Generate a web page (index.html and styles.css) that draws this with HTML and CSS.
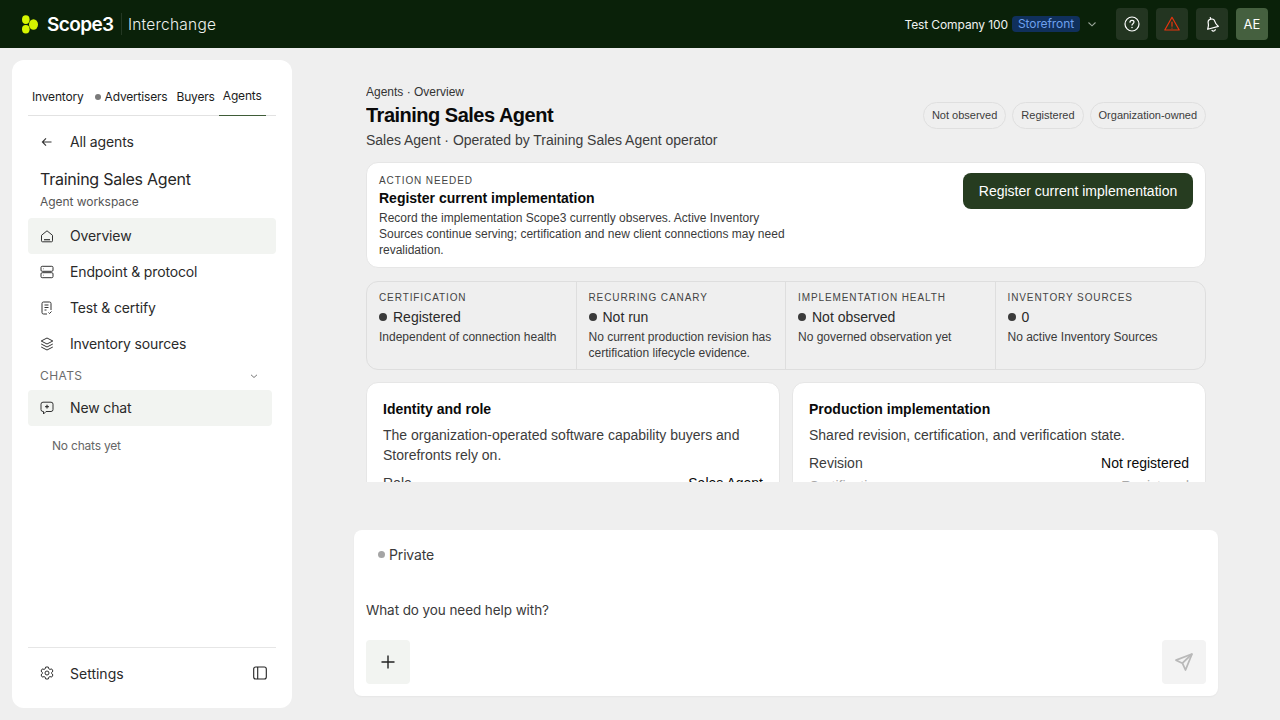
FILE: index.html
```html
<!DOCTYPE html>
<html lang="en">
<head>
<meta charset="utf-8">
<title>Training Sales Agent</title>
<link rel="stylesheet" href="styles.css">
</head>
<body>
<header class="topbar">
  <div class="brand">
    <svg class="logo" viewBox="0 0 16 19" width="16" height="19"><g fill="#d6f500"><ellipse cx="3.800" cy="4.600" rx="3.800" ry="4.400"/><ellipse cx="3.800" cy="14.300" rx="3.800" ry="4.200"/><ellipse cx="11.500" cy="9.500" rx="4.500" ry="5.200"/></g></svg>
    <span class="wordmark">Scope3</span>
    <span class="brand-sep"></span>
    <span class="product">Interchange</span>
  </div>
  <div class="top-right">
    <span class="company">Test Company 100</span>
    <span class="chip">Storefront</span>
    <svg class="chev" viewBox="0 0 10 10" width="10" height="10"><path d="M1.500 3.500 5 6.800l3.500-3.300" fill="none" stroke="#9aa69a" stroke-width="1.100"/></svg>
    <div class="top-buttons">
      <button class="top-btn"><svg viewBox="0 0 16 16" width="16" height="16" fill="none" stroke="#fff" stroke-width="1.200" stroke-linecap="round"><circle cx="8" cy="8" r="7"/><path d="M6 6.200c0-1.200 1-1.900 2-1.900s2 .7 2 1.800c0 1.500-2 1.600-2 3"/><path d="M8 11.500v.1" stroke-width="1.500"/></svg></button>
      <button class="top-btn"><svg viewBox="0 0 16 16" width="16" height="16" fill="none" stroke="#e8340f" stroke-width="1.200" stroke-linejoin="round" stroke-linecap="round"><path d="M8 1.300.8 14h14.400z"/><path d="M8 6v4.200M8 12v.1"/></svg></button>
      <button class="top-btn"><svg viewBox="0 0 16 16" width="16" height="16" fill="none" stroke="#fff" stroke-width="1.200" stroke-linejoin="round" stroke-linecap="round"><g transform="rotate(-15 8 8)"><path d="M8 3C5.800 3 4.500 4.700 4.500 6.800c0 2.400-1.500 3.600-2 5.200h11c-.5-1.600-2-2.800-2-5.200C11.500 4.700 10.200 3 8 3z"/><path d="M8 1.300V3M6.300 14.200a1.900 1.900 0 0 0 3.400 0"/></g></svg></button>
      <button class="top-btn avatar">AE</button>
    </div>
  </div>
</header>

<div class="shell">
  <aside class="sidebar">
    <nav class="tabs">
      <a class="tab">Inventory</a>
      <a class="tab tab-dot"><i></i>Advertisers</a>
      <a class="tab tab-buyers">Buyers</a>
      <a class="tab active">Agents</a>
    </nav>
    <a class="nav-row back">
      <svg class="ico" viewBox="0 0 14 14" width="14" height="14" fill="none" stroke="#333" stroke-width="1.100"><path d="M11.500 7H2.500M6 3.300 2.400 7 6 10.700"/></svg>
      <span>All agents</span>
    </a>
    <div class="side-title">Training Sales Agent</div>
    <div class="side-sub">Agent workspace</div>
    <a class="nav-row selected">
      <svg class="ico" viewBox="0 0 14 14" width="14" height="14" fill="none" stroke="#333" stroke-width="1"><path d="M1.500 6.300 7 1.800l5.500 4.500v5.500a1 1 0 0 1-1 1h-9a1 1 0 0 1-1-1z"/><path d="M4 10.700h6" stroke-width="1.200"/></svg>
      <span>Overview</span>
    </a>
    <a class="nav-row">
      <svg class="ico" viewBox="0 0 14 14" width="14" height="14" fill="none" stroke="#333" stroke-width="1"><rect x="1" y="1.300" width="12" height="5" rx="1.200"/><rect x="1" y="7.700" width="12" height="5" rx="1.200"/><path d="M3 3.800h.5M3 10.200h.5"/></svg>
      <span>Endpoint &amp; protocol</span>
    </a>
    <a class="nav-row">
      <svg class="ico" viewBox="0 0 14 14" width="14" height="14" fill="none" stroke="#333" stroke-width="1"><path d="M7 13H3.500a1.500 1.500 0 0 1-1.500-1.500v-9A1.500 1.500 0 0 1 3.500 1h6A1.500 1.500 0 0 1 11 2.500V9"/><path d="M4.500 4h4M4.500 6.500h4M4.500 9h2M8.500 11.500l1 1 2-2"/></svg>
      <span>Test &amp; certify</span>
    </a>
    <a class="nav-row">
      <svg class="ico" viewBox="0 0 14 14" width="14" height="14" fill="none" stroke="#333" stroke-width="1" stroke-linejoin="round"><path d="M7 1 1.200 4 7 7l5.800-3z"/><path d="M1.200 7 7 10l5.800-3M1.200 10 7 13l5.800-3"/></svg>
      <span>Inventory sources</span>
    </a>
    <div class="chats-head">
      <span>CHATS</span>
      <svg viewBox="0 0 10 10" width="10" height="10"><path d="M2 3.800 5 6.500l3-2.700" fill="none" stroke="#777" stroke-width="1"/></svg>
    </div>
    <a class="nav-row selected new-chat">
      <svg class="ico" viewBox="0 0 14 14" width="14" height="14" fill="none" stroke="#333" stroke-width="1"><path d="M3 1.200h8a2 2 0 0 1 2 2v5.300a2 2 0 0 1-2 2H6L3.500 13v-2.500H3a2 2 0 0 1-2-2V3.200a2 2 0 0 1 2-2z"/><path d="M7 3.800v3.800M5.100 5.700h3.800" stroke-width="1.200"/></svg>
      <span>New chat</span>
    </a>
    <div class="no-chats">No chats yet</div>
    <div class="side-foot">
      <svg class="ico" viewBox="0 0 14 14" width="14" height="14" fill="none" stroke="#333" stroke-width="1" stroke-linejoin="round"><path d="M5.700 1h2.600l.4 1.700 1.300.7 1.700-.5 1.300 2.200-1.300 1.200v1.400l1.300 1.200-1.300 2.200-1.700-.5-1.300.7-.4 1.700H5.700l-.4-1.700-1.300-.7-1.700.5L1 8.900l1.300-1.200V6.300L1 5.100l1.300-2.200 1.700.5 1.300-.7z"/><circle cx="7" cy="7" r="2"/></svg>
      <span>Settings</span>
      <svg class="panel-ico" viewBox="0 0 14 14" width="14" height="14" fill="none" stroke="#222" stroke-width="1.100"><rect x=".7" y="1" width="12.600" height="12" rx="2"/><path d="M4.700 1v12"/></svg>
    </div>
  </aside>

  <main class="workspace">
    <div class="scroller">
      <div class="page-head">
        <div class="head-text">
          <div class="crumb">Agents · Overview</div>
          <h1>Training Sales Agent</h1>
          <p class="head-sub">Sales Agent · Operated by Training Sales Agent operator</p>
        </div>
        <div class="pills">
          <span class="pill">Not observed</span>
          <span class="pill">Registered</span>
          <span class="pill">Organization-owned</span>
        </div>
      </div>

      <section class="action-card">
        <div class="action-text">
          <div class="eyebrow">ACTION NEEDED</div>
          <h2>Register current implementation</h2>
          <p>Record the implementation Scope3 currently observes. Active Inventory Sources continue serving; certification and new client connections may need revalidation.</p>
        </div>
        <button class="primary">Register current implementation</button>
      </section>

      <section class="stats">
        <div class="stat">
          <div class="eyebrow">CERTIFICATION</div>
          <div class="stat-val"><i></i>Registered</div>
          <p>Independent of connection health</p>
        </div>
        <div class="stat">
          <div class="eyebrow">RECURRING CANARY</div>
          <div class="stat-val"><i></i>Not run</div>
          <p>No current production revision has certification lifecycle evidence.</p>
        </div>
        <div class="stat">
          <div class="eyebrow">IMPLEMENTATION HEALTH</div>
          <div class="stat-val"><i></i>Not observed</div>
          <p>No governed observation yet</p>
        </div>
        <div class="stat">
          <div class="eyebrow">INVENTORY SOURCES</div>
          <div class="stat-val"><i></i>0</div>
          <p>No active Inventory Sources</p>
        </div>
      </section>

      <section class="cards">
        <article class="card">
          <h3>Identity and role</h3>
          <p>The organization-operated software capability buyers and Storefronts rely on.</p>
          <div class="kv"><span>Role</span><b>Sales Agent</b></div>
        </article>
        <article class="card">
          <h3>Production implementation</h3>
          <p>Shared revision, certification, and verification state.</p>
          <div class="kv"><span>Revision</span><b>Not registered</b></div>
          <div class="kv kv-muted"><span>Certification</span><b>Registered</b></div>
        </article>
      </section>
    </div>

    <section class="composer">
      <div class="privacy"><i></i>Private</div>
      <div class="prompt">What do you need help with?</div>
      <div class="composer-actions">
        <button class="square add"><svg viewBox="0 0 16 16" width="16" height="16" fill="none" stroke="#222" stroke-width="1.400"><path d="M8 1.500v13M1.500 8h13"/></svg></button>
        <button class="square send"><svg viewBox="0 0 20 20" width="20" height="20" fill="none" stroke="#b9b9b9" stroke-width="1.800" stroke-linejoin="round"><path d="M18 2 2 8.200l6.400 3L11.500 18z"/><path d="M18 2 8.400 11.200"/></svg></button>
      </div>
    </section>
  </main>
</div>
</body>
</html>
```

FILE: styles.css
```css
* { box-sizing: border-box; }
html, body { margin: 0; height: 100%; }
body {
  width: 1280px;
  height: 720px;
  overflow: hidden;
  background: #efefef;
  font-family: Inter, "Liberation Sans", sans-serif;
  color: #222;
  display: flex;
  flex-direction: column;
}
button { border: 0; font: inherit; padding: 0; }

/* Top bar */
.topbar {
  height: 48px;
  flex: none;
  background: #0a2109;
  color: #fff;
  display: flex;
  align-items: center;
  justify-content: space-between;
  padding: 0 12px 0 22px;
}
.brand { display: flex; align-items: center; }
.logo { margin-right: 9px; }
.wordmark { font-size: 19px; font-weight: 600; letter-spacing: -0.6px; width: 66px; }
.brand-sep { width: 1px; height: 22px; background: #243823; margin: 0 6px 0 8px; }
.product { font-size: 15.500px; font-weight: 300; letter-spacing: 0.22px; color: #eef1ee; }
.top-right { display: flex; align-items: center; }
.company { font-size: 12px; letter-spacing: -0.1px; color: #f0f2f0; }
.chip {
  margin-left: 4px;
  height: 16px;
  width: 68px;
  border-radius: 4px;
  background: #10305c;
  color: #6ea0ee;
  font-size: 12px;
  letter-spacing: -0.1px;
  line-height: 16px;
  text-align: center;
}
.chev { margin: 0 19px 0 7px; }
.top-buttons { display: flex; gap: 8px; }
.top-btn {
  width: 32px;
  height: 32px;
  border-radius: 4px;
  background: #233521;
  color: #fff;
  display: flex;
  align-items: center;
  justify-content: center;
  font-size: 13px;
}
.avatar { background: #45603f; }

/* Shell */
.shell { flex: 1; display: flex; min-height: 0; padding: 12px 0 12px 12px; }

/* Sidebar */
.sidebar {
  width: 280px;
  flex: none;
  background: #fff;
  border-radius: 12px;
  padding: 24px 16px 16px;
  display: flex;
  flex-direction: column;
}
.tabs {
  display: flex;
  height: 32px;
  border-bottom: 1px solid #e2e2e2;
  padding-left: 4px;
  font-size: 12px;
  letter-spacing: -0.18px;
  color: #1c1c1c;
}
.tab { display: flex; align-items: center; height: 25px; white-space: nowrap; margin-right: 11px; }
.tab-dot i { width: 6px; height: 6px; border-radius: 50%; background: #7a7a7a; margin-right: 4px; }
.tab.tab-dot { margin-right: 9px; }
.tab.tab-buyers { margin-right: 4px; }
.tab.active {
  height: 32px;
  margin: 0 0 -1px 0;
  padding: 0 4px 9px;
  border-bottom: 1px solid #3f5c38;
  width: 47px;
  justify-content: center;
}
.nav-row {
  display: flex;
  align-items: center;
  height: 36px;
  padding-left: 12px;
  border-radius: 4px;
  font-size: 14px;
  letter-spacing: -0.14px;
  color: #2a2a2a;
}
.nav-row span { padding-bottom: 2px; }
.nav-row .ico { margin-right: 16px; flex: none; }
.back { margin-top: 8px; }
.side-title { font-size: 16px; letter-spacing: -0.25px; padding: 8px 0 0 12px; line-height: 22px; color: #262626; }
.side-sub { font-size: 12px; letter-spacing: -0.05px; padding: 4px 0 0 12px; line-height: 16px; color: #555; margin-bottom: 8px; }
.selected { background: #f2f4f1; }
.chats-head {
  display: flex;
  align-items: center;
  justify-content: space-between;
  height: 28px;
  padding: 0 13px 0 12px;
  width: 244px;
  font-size: 12px;
  letter-spacing: 0.4px;
  color: #6c6c6c;
}
.chats-head span { padding-bottom: 2px; }
.new-chat { width: 244px; }
.no-chats { font-size: 12px; letter-spacing: -0.2px; color: #666; padding: 12px 0 0 24px; line-height: 16px; }
.side-foot {
  margin-top: auto;
  border-top: 1px solid #e6e6e6;
  height: 45px;
  padding: 6px 9px 0 12px;
  display: flex;
  align-items: center;
  font-size: 14px;
  color: #2a2a2a;
}
.side-foot .ico { margin-right: 16px; }
.panel-ico { margin-left: auto; }

/* Main */
.workspace {
  flex: 1;
  min-width: 0;
  display: flex;
  flex-direction: column;
  align-items: center;
  font-family: "Liberation Sans", Arial, sans-serif;
}
.scroller { width: 840px; height: 422px; overflow: hidden; padding-top: 25px; flex: none; }
.page-head { display: flex; justify-content: space-between; align-items: flex-start; }
.crumb { font-size: 12px; line-height: 14px; color: #333; }
h1 { margin: 3px 0 0; font-size: 20px; line-height: 26px; font-weight: 700; color: #0a0a0a; letter-spacing: -0.5px; }
.head-sub { margin: 3px 0 0; font-size: 14px; line-height: 18px; letter-spacing: -0.02px; color: #3c3c3c; }
.pills { display: flex; gap: 6px; margin-top: 17px; }
.pill {
  height: 27px;
  line-height: 25px;
  padding: 0 8px;
  border: 1px solid #dfdfdf;
  border-radius: 14px;
  font-size: 11px;
  color: #3c3c3c;
}
.action-card {
  margin-top: 13px;
  height: 106px;
  background: #fff;
  border: 1px solid #e6e6e6;
  border-radius: 12px;
  padding: 10px 12px;
  display: flex;
  justify-content: space-between;
  align-items: flex-start;
}
.action-text { width: 426px; padding-top: 1px; }
.eyebrow { font-size: 10px; line-height: 14px; letter-spacing: 0.9px; color: #444; }
h2 { margin: 1px 0 0; font-size: 14px; line-height: 18px; font-weight: 700; color: #0a0a0a; }
.action-text p { margin: 3px 0 0; font-size: 12px; line-height: 16px; color: #3a3a3a; }
.primary {
  width: 230px;
  height: 36px;
  border-radius: 8px;
  background: #263c20;
  color: #fff;
  font-size: 14px;
  font-family: "Liberation Sans", Arial, sans-serif;
}
.stats {
  margin-top: 13px;
  height: 89px;
  border: 1px solid #dedede;
  border-radius: 12px;
  display: grid;
  grid-template-columns: repeat(4, 1fr);
}
.stat { padding: 9px 12px; border-right: 1px solid #dedede; }
.stat:last-child { border-right: 0; }
.stat-val { display: flex; align-items: center; font-size: 14px; line-height: 18px; margin-top: 3px; color: #2a2a2a; }
.stat-val i { width: 8px; height: 8px; border-radius: 50%; background: #3a3a3a; margin-right: 6px; }
.stat p { margin: 3px 0 0; font-size: 12px; line-height: 16px; color: #3a3a3a; }
.cards { margin-top: 12px; display: grid; grid-template-columns: 1fr 1fr; gap: 12px; }
.card {
  background: #fff;
  border: 1px solid #e6e6e6;
  border-radius: 12px;
  padding: 16px;
  min-height: 200px;
}
h3 { margin: 0; font-size: 14px; line-height: 20px; font-weight: 700; color: #0a0a0a; }
.card p { margin: 6px 0 0; font-size: 14px; line-height: 20px; color: #3c3c3c; }
.kv { display: flex; justify-content: space-between; font-size: 14px; line-height: 20px; margin-top: 8px; color: #3c3c3c; }
.kv b { font-weight: 400; color: #0a0a0a; }
.kv-muted { margin-top: 3px; color: #a8a8a8; }
.kv-muted b { color: #a8a8a8; }

/* Composer */
.composer {
  margin-top: 48px;
  width: 864px;
  height: 166px;
  background: #fff;
  border-radius: 8px;
  padding: 12px;
  font-family: Inter, "Liberation Sans", sans-serif;
  display: flex;
  flex-direction: column;
  box-shadow: 0 1px 2px rgba(0,0,0,.04);
}
.privacy { display: flex; align-items: center; height: 24px; padding-left: 12px; font-size: 14px; letter-spacing: -0.15px; color: #3a3a3a; }
.privacy i { width: 7px; height: 7px; border-radius: 50%; background: #a5a5a5; margin-right: 4px; }
.prompt { margin-top: 34px; font-size: 13.500px; letter-spacing: -0.08px; line-height: 20px; color: #3a3a3a; }
.composer-actions { margin-top: auto; display: flex; justify-content: space-between; }
.square { width: 44px; height: 44px; border-radius: 4px; display: flex; align-items: center; justify-content: center; }
.add { background: #f2f4f1; }
.send { background: #f3f3f3; }
```
